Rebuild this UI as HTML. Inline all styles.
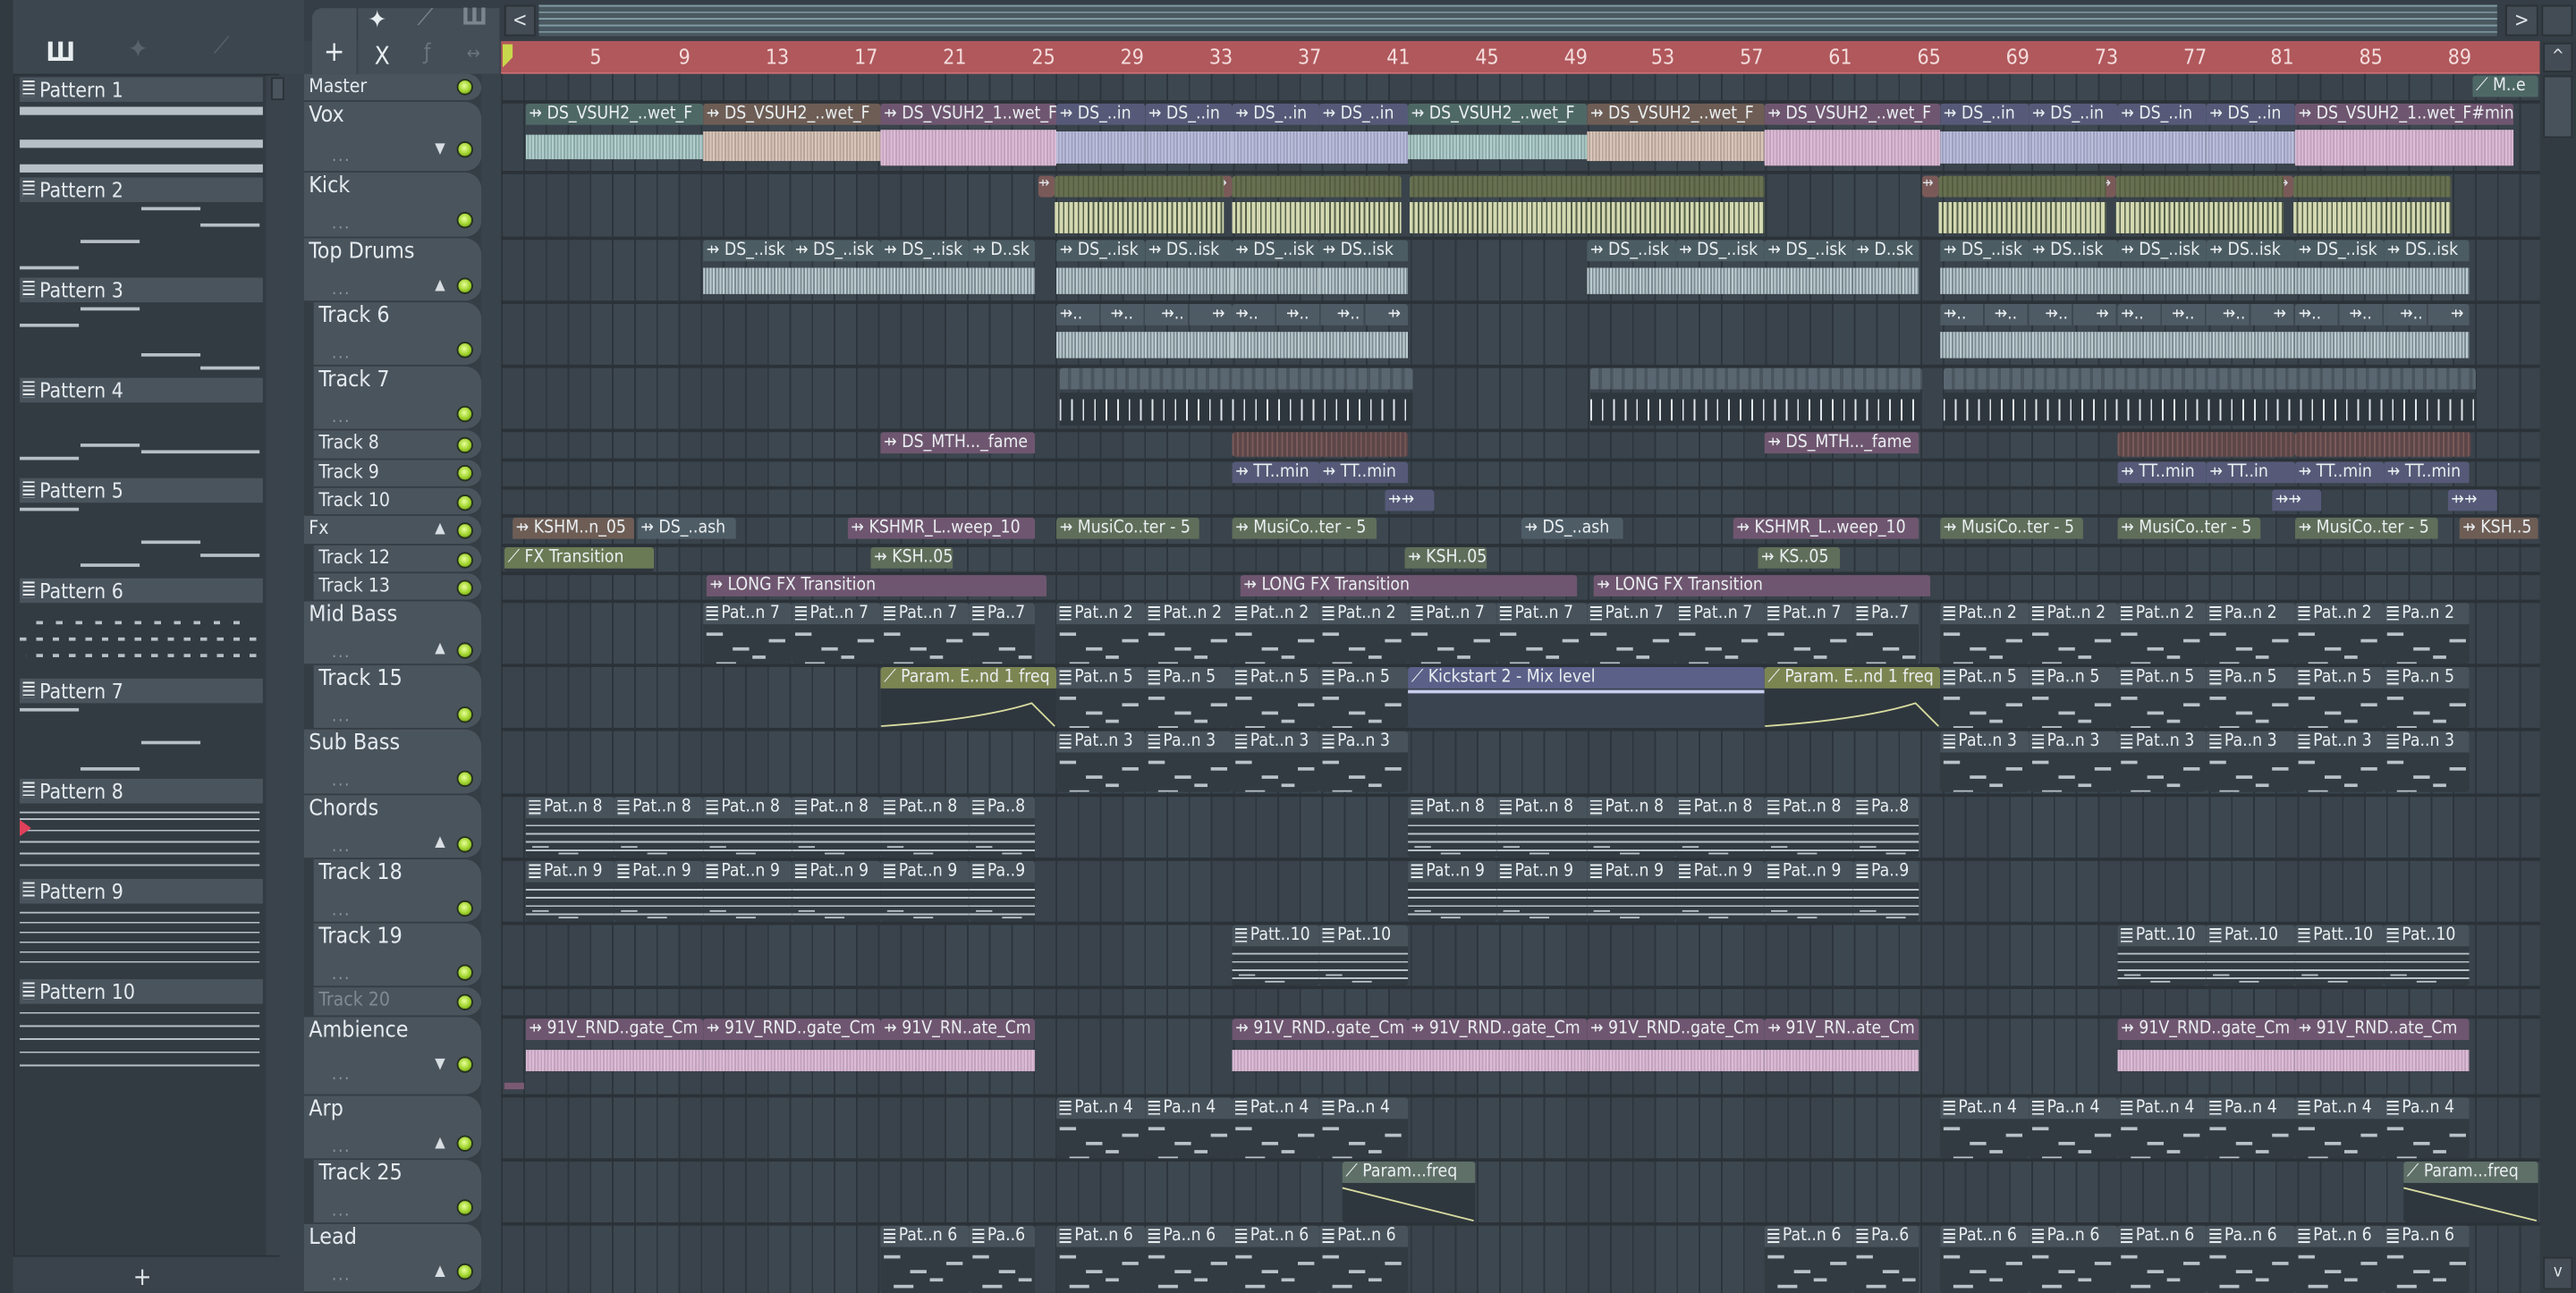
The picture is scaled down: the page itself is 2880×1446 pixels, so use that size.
<!DOCTYPE html>
<html><head><meta charset="utf-8"><style>
*{margin:0;padding:0;box-sizing:border-box}
html,body{width:2880px;height:1446px;overflow:hidden;background:#2c343b}
#s{position:absolute;left:0;top:0;width:1568px;height:787px;transform:scale(1.83673,1.83736);transform-origin:0 0;background:#39434b;font-family:"DejaVu Sans Condensed","DejaVu Sans","Liberation Sans",sans-serif;font-stretch:condensed;color:#dfe6ea}
.a{position:absolute}
.grid{position:absolute;left:305px;top:45px;width:1241px;height:742px;background-color:#3d4750;background-image:repeating-linear-gradient(90deg,#2d353c 0 1px,transparent 1px 13.5px),repeating-linear-gradient(90deg,rgba(0,0,0,.06) 0 54px,transparent 54px 108px)}
.rs{position:absolute;left:305px;width:1241px;height:2px;background:#2b3238}
.c{position:absolute;overflow:hidden;border-radius:2px}
.h{height:13px;font-size:10.5px;line-height:13px;white-space:nowrap;padding-left:2px;color:#e9eef0;overflow:hidden}
.w{position:absolute;left:0;right:0;top:15px;bottom:1px}
.a1 .h{background:#4e6866}.a1 .w{background:repeating-linear-gradient(90deg,#b3cfcd 0 1px,#8aa8a6 1px 2px) center/100% 65% no-repeat}
.a2 .h{background:#6d5d55}.a2 .w{background:repeating-linear-gradient(90deg,#dac6ba 0 1px,#b8a599 1px 2px) center/100% 80% no-repeat}
.a3 .h{background:#6f5670}.a3 .w{background:repeating-linear-gradient(90deg,#dcbcd6 0 1px,#c3a2bd 1px 2px) center/100% 95% no-repeat}
.a4 .h{background:#565a78}.a4 .w{background:repeating-linear-gradient(90deg,#bcbedb 0 1px,#9ea1c0 1px 2px) center/100% 85% no-repeat}
.dr .h{background:#4c5c63}.dr .w{background:repeating-linear-gradient(90deg,#bccbd0 0 1px,#7d8d93 1px 2px) center/100% 80% no-repeat}
.kk .h{background:repeating-linear-gradient(90deg,#667050 0 2px,#555d40 2px 3px)}.kk .w{background:repeating-linear-gradient(90deg,#d3d8b0 0 2px,#56604a 2px 3px) center/100% 95% no-repeat}
.t7 .h{background:repeating-linear-gradient(90deg,#5a6670 0 5px,#4a555e 5px 7px)}.t7 .w{background:repeating-linear-gradient(90deg,#dfe6ea 0 1px,#2f373e 1px 7px) center/100% 65% no-repeat,#2f373e}
.pk .h{background:#6f5670}
.rd{background:repeating-linear-gradient(90deg,#7a5a5a 0 1px,#5c4648 1px 3px)}
.ol .h{background:#7b8552}.ol{background:#2f373e}
.bl .h{background:#5a6088}.bl{background:#3a4450}
.gt .h{background:#5f6e5a}
.sl .h{background:#4e5c66}
.pt .h{background:#47525b}.pt{background:#323b42}
.pt .h:before{content:"";display:inline-block;width:7px;height:9px;margin:2px 2px 0 0;vertical-align:top;background:repeating-linear-gradient(#e8eef0 0 1px,#47525b 1px 2.5px),#e8eef0}
.pn{position:absolute;left:0;right:0;top:14px;bottom:0;background:linear-gradient(#b9c2c8,#b9c2c8) 2px 4px/10px 2px no-repeat,linear-gradient(#b9c2c8,#b9c2c8) 18px 13px/10px 2px no-repeat,linear-gradient(#b9c2c8,#b9c2c8) 30px 18px/8px 2px no-repeat,linear-gradient(#b9c2c8,#b9c2c8) 8px 22px/12px 2px no-repeat,linear-gradient(#b9c2c8,#b9c2c8) 40px 8px/10px 2px no-repeat}
.pc{position:absolute;left:0;right:0;top:14px;bottom:0;background:repeating-linear-gradient(#b9c2c8 0 1px,transparent 1px 5px) 0 3px/100% 20px no-repeat,linear-gradient(#b9c2c8,#b9c2c8) 4px 16px/10px 1px no-repeat,linear-gradient(#b9c2c8,#b9c2c8) 20px 20px/12px 1px no-repeat}
.th{position:absolute;left:185px;width:108px;background:#4a545d;border-radius:0 10px 10px 0;border-bottom:1px solid #353d44}
.sub{border-left:6px solid #353d44}
.tn{position:absolute;left:3px;top:0;font-size:13.5px;color:#e4eaee;white-space:nowrap}
.sm .tn{font-size:11.5px}
.led{position:absolute;right:5px;width:10px;height:10px;border-radius:50%;background:radial-gradient(circle at 45% 40%,#e8ff9a 0,#9ed22a 55%,#4f7a10 100%);border:1px solid #26301f}
.dt{position:absolute;left:17px;font-size:10px;color:#8d989f;letter-spacing:1px}
.tri{position:absolute;right:22px;font-size:9px;color:#d8dee2}
.pat{position:absolute;left:12px;width:148px;height:61px}
.pat .ph{height:15px;background:#4a545d;font-size:12.5px;line-height:15px;padding-left:2px;color:#e4eaee}
.pat .ph:before{content:"";display:inline-block;width:7px;height:10px;margin:2px 3px 0 0;vertical-align:top;background:repeating-linear-gradient(#e8eef0 0 1px,#4a545d 1px 2.5px),#e8eef0}
.nb{position:absolute;height:3px;background:#b7c0c6}
.rn{position:absolute;top:27px;font-size:12.5px;color:#f4dcdc}
</style></head><body><div id="s">

<div class="a" style="left:0;top:0;width:8px;height:787px;background:#313a41"></div>
<div class="a" style="left:8px;top:0;width:177px;height:45px;background:#3c464e"></div>
<div class="a" style="left:28px;top:22px;font-size:16px;color:#e8eef0;font-weight:bold">Ш</div>
<div class="a" style="left:78px;top:20px;font-size:16px;color:#58636b">✦</div>
<div class="a" style="left:130px;top:20px;font-size:14px;color:#58636b">⟋</div>
<div class="a" style="left:8px;top:45px;width:162px;height:720px;background:#323b42;border:1px solid #2a3137"></div>
<div class="a" style="left:162px;top:46px;width:14px;height:718px;background:#3a434b"></div>
<div class="a" style="left:165px;top:47px;width:8px;height:14px;background:#4a545d;border:1px solid #2a3137"></div>
<div class="a" style="left:8px;top:765px;width:177px;height:22px;background:#3a434b"></div>
<div class="a" style="left:81px;top:768px;font-size:15px;color:#dfe6ea">+</div>

<div class="pat" style="top:47px"><div class="ph">Pattern 1</div><div class="nb" style="left:0;top:18px;width:148px;height:5px"></div><div class="nb" style="left:0;top:38px;width:148px;height:5px"></div><div class="nb" style="left:0;top:53px;width:148px;height:5px"></div></div>
<div class="pat" style="top:108px"><div class="ph">Pattern 2</div><div class="nb" style="left:74px;top:18px;width:36px;height:2px"></div><div class="nb" style="left:110px;top:28px;width:36px;height:2px"></div><div class="nb" style="left:37px;top:38px;width:36px;height:2px"></div><div class="nb" style="left:0;top:54px;width:36px;height:2px"></div></div>
<div class="pat" style="top:169px"><div class="ph">Pattern 3</div><div class="nb" style="left:37px;top:18px;width:36px;height:2px"></div><div class="nb" style="left:0;top:28px;width:36px;height:2px"></div><div class="nb" style="left:74px;top:46px;width:36px;height:2px"></div><div class="nb" style="left:110px;top:54px;width:36px;height:2px"></div></div>
<div class="pat" style="top:230px"><div class="ph">Pattern 4</div><div class="nb" style="left:0;top:48px;width:36px;height:2px"></div><div class="nb" style="left:37px;top:40px;width:36px;height:2px"></div><div class="nb" style="left:74px;top:44px;width:72px;height:2px"></div></div>
<div class="pat" style="top:291px"><div class="ph">Pattern 5</div><div class="nb" style="left:0;top:18px;width:36px;height:2px"></div><div class="nb" style="left:74px;top:38px;width:36px;height:2px"></div><div class="nb" style="left:110px;top:46px;width:36px;height:2px"></div><div class="nb" style="left:37px;top:52px;width:36px;height:2px"></div></div>
<div class="pat" style="top:352px"><div class="ph">Pattern 6</div><div class="nb" style="left:10px;top:26px;width:130px;height:2px;background:repeating-linear-gradient(90deg,#b7c0c6 0 4px,transparent 4px 12px)"></div><div class="nb" style="left:0;top:36px;width:146px;height:2px;background:repeating-linear-gradient(90deg,#b7c0c6 0 4px,transparent 4px 10px)"></div><div class="nb" style="left:4px;top:46px;width:140px;height:2px;background:repeating-linear-gradient(90deg,transparent 0 6px,#b7c0c6 6px 10px)"></div></div>
<div class="pat" style="top:413px"><div class="ph">Pattern 7</div><div class="nb" style="left:0;top:18px;width:36px;height:2px"></div><div class="nb" style="left:74px;top:38px;width:36px;height:2px"></div><div class="nb" style="left:37px;top:54px;width:36px;height:2px"></div></div>
<div class="pat" style="top:474px"><div class="ph">Pattern 8</div><div class="nb" style="left:0;top:20px;width:146px;height:2px;background:repeating-linear-gradient(#b7c0c6 0 1px,transparent 1px 6px)"></div><div class="nb" style="left:0;top:24px;width:146px;height:30px;background:repeating-linear-gradient(#b7c0c6 0 1px,transparent 1px 7px)"></div></div>
<div class="a" style="left:12px;top:499px;width:0;height:0;border-left:7px solid #e0405a;border-top:5px solid transparent;border-bottom:5px solid transparent"></div>
<div class="pat" style="top:535px"><div class="ph">Pattern 9</div><div class="nb" style="left:0;top:20px;width:146px;height:36px;background:repeating-linear-gradient(#b7c0c6 0 1px,transparent 1px 6px)"></div></div>
<div class="pat" style="top:596px"><div class="ph">Pattern 10</div><div class="nb" style="left:0;top:20px;width:146px;height:36px;background:repeating-linear-gradient(#b7c0c6 0 1px,transparent 1px 8px)"></div></div>

<div class="a" style="left:185px;top:0;width:1383px;height:25px;background:#353e46"></div>
<div class="a" style="left:190px;top:5px;width:27px;height:40px;background:#48525b;border-radius:6px 0 0 0"></div>
<div class="a" style="left:197px;top:22px;font-size:17px;color:#e8eef0">+</div>
<div class="a" style="left:218px;top:5px;width:86px;height:40px;background:#444e57"></div>
<div class="a" style="left:224px;top:3px;font-size:15px;color:#e8eef0">✦</div>
<div class="a" style="left:254px;top:3px;font-size:14px;color:#7a858d">⟋</div>
<div class="a" style="left:281px;top:3px;font-size:14px;color:#7a858d;font-weight:bold">Ш</div>
<div class="a" style="left:228px;top:25px;font-size:15px;color:#e8eef0">X</div>
<div class="a" style="left:258px;top:25px;font-size:13px;color:#6a757d">ƒ</div>
<div class="a" style="left:284px;top:26px;font-size:11px;color:#6a757d">↔</div>
<div class="a" style="left:307px;top:3px;width:19px;height:19px;background:#434c54;border:1px solid #2a3137;font-size:12px;text-align:center;line-height:17px">&lt;</div>
<div class="a" style="left:328px;top:3px;width:1192px;height:19px;background:#4a5860;background-image:repeating-linear-gradient(#7f9aa2 0 1px,transparent 1px 4px)"></div>
<div class="a" style="left:1525px;top:3px;width:20px;height:19px;background:#434c54;border:1px solid #2a3137;font-size:12px;text-align:center;line-height:17px">&gt;</div>
<div class="a" style="left:1547px;top:3px;width:19px;height:19px;background:#434c54;border:1px solid #2a3137"></div>
<div class="a" style="left:305px;top:25px;width:1241px;height:20px;background:#b0585c;border-bottom:1px solid #d07074"></div>
<div class="a" style="left:306px;top:27px;width:0;height:0;border-left:6px solid #c8d84c;border-top:8px solid #c8d84c;border-bottom:6px solid transparent"></div>
<div class="rn" style="left:359px">5</div><div class="rn" style="left:413px">9</div><div class="rn" style="left:466px">13</div><div class="rn" style="left:520px">17</div><div class="rn" style="left:574px">21</div><div class="rn" style="left:628px">25</div><div class="rn" style="left:682px">29</div><div class="rn" style="left:736px">33</div><div class="rn" style="left:790px">37</div><div class="rn" style="left:844px">41</div><div class="rn" style="left:898px">45</div><div class="rn" style="left:952px">49</div><div class="rn" style="left:1005px">53</div><div class="rn" style="left:1059px">57</div><div class="rn" style="left:1113px">61</div><div class="rn" style="left:1167px">65</div><div class="rn" style="left:1221px">69</div><div class="rn" style="left:1275px">73</div><div class="rn" style="left:1329px">77</div><div class="rn" style="left:1382px">81</div><div class="rn" style="left:1436px">85</div><div class="rn" style="left:1490px">89</div>
<div class="a" style="left:1546px;top:25px;width:22px;height:762px;background:#333b42"></div>
<div class="a" style="left:1548px;top:26px;width:18px;height:18px;background:#434c54;border:1px solid #2a3137;font-size:10px;text-align:center;line-height:16px">^</div>
<div class="a" style="left:1548px;top:46px;width:18px;height:38px;background:#48525a;border:1px solid #2a3137"></div>
<div class="a" style="left:1548px;top:765px;width:18px;height:20px;background:#434c54;border:1px solid #2a3137;font-size:10px;text-align:center;line-height:18px">v</div>

<div class="a" style="left:185px;top:45px;width:120px;height:742px;background:#353e45"></div>
<div class="a" style="left:293px;top:45px;width:12px;height:742px;background:#39434b"></div>

<div class="th sm" style="top:45px;height:17px"><div class="tn">Master</div><div class="led" style="top:3px"></div></div>
<div class="th" style="top:62px;height:43px"><div class="tn">Vox</div><div class="tri" style="top:24px">▼</div><div class="dt" style="top:28px">...</div><div class="led" style="top:24px"></div></div>
<div class="th" style="top:105px;height:40px"><div class="tn">Kick</div><div class="dt" style="top:26px">...</div><div class="led" style="top:24px"></div></div>
<div class="th" style="top:145px;height:39px"><div class="tn">Top Drums</div><div class="tri" style="top:24px">▲</div><div class="dt" style="top:26px">...</div><div class="led" style="top:24px"></div></div>
<div class="th sub" style="top:184px;height:39px"><div class="tn">Track 6</div><div class="dt" style="top:26px;left:11px">...</div><div class="led" style="top:24px"></div></div>
<div class="th sub" style="top:223px;height:39px"><div class="tn">Track 7</div><div class="dt" style="top:26px;left:11px">...</div><div class="led" style="top:24px"></div></div>
<div class="th sub sm" style="top:262px;height:18px"><div class="tn">Track 8</div><div class="led" style="top:4px"></div></div>
<div class="th sub sm" style="top:280px;height:17px"><div class="tn">Track 9</div><div class="led" style="top:3px"></div></div>
<div class="th sub sm" style="top:297px;height:17px"><div class="tn">Track 10</div><div class="led" style="top:4px"></div></div>
<div class="th sm" style="top:314px;height:18px"><div class="tn">Fx</div><div class="tri" style="top:3px">▲</div><div class="led" style="top:4px"></div></div>
<div class="th sub sm" style="top:332px;height:17px"><div class="tn">Track 12</div><div class="led" style="top:4px"></div></div>
<div class="th sub sm" style="top:349px;height:17px"><div class="tn">Track 13</div><div class="led" style="top:4px"></div></div>
<div class="th" style="top:366px;height:39px"><div class="tn">Mid Bass</div><div class="tri" style="top:24px">▲</div><div class="dt" style="top:26px">...</div><div class="led" style="top:25px"></div></div>
<div class="th sub" style="top:405px;height:39px"><div class="tn">Track 15</div><div class="dt" style="top:26px;left:11px">...</div><div class="led" style="top:25px"></div></div>
<div class="th" style="top:444px;height:40px"><div class="tn">Sub Bass</div><div class="dt" style="top:26px">...</div><div class="led" style="top:25px"></div></div>
<div class="th" style="top:484px;height:39px"><div class="tn">Chords</div><div class="tri" style="top:24px">▲</div><div class="dt" style="top:26px">...</div><div class="led" style="top:25px"></div></div>
<div class="th sub" style="top:523px;height:39px"><div class="tn">Track 18</div><div class="dt" style="top:26px;left:11px">...</div><div class="led" style="top:25px"></div></div>
<div class="th sub" style="top:562px;height:39px"><div class="tn">Track 19</div><div class="dt" style="top:26px;left:11px">...</div><div class="led" style="top:25px"></div></div>
<div class="th sub sm" style="top:601px;height:18px"><div class="tn" style="color:#7f8a92">Track 20</div><div class="led" style="top:4px"></div></div>
<div class="th" style="top:619px;height:48px"><div class="tn">Ambience</div><div class="tri" style="top:24px">▼</div><div class="dt" style="top:30px">...</div><div class="led" style="top:24px"></div></div>
<div class="th" style="top:667px;height:39px"><div class="tn">Arp</div><div class="tri" style="top:24px">▲</div><div class="dt" style="top:26px">...</div><div class="led" style="top:24px"></div></div>
<div class="th sub" style="top:706px;height:39px"><div class="tn">Track 25</div><div class="dt" style="top:26px;left:11px">...</div><div class="led" style="top:24px"></div></div>
<div class="th" style="top:745px;height:42px"><div class="tn">Lead</div><div class="tri" style="top:24px">▲</div><div class="dt" style="top:26px">...</div><div class="led" style="top:24px"></div></div>

<div class="grid"></div>
<div class="rs" style="top:61px"></div><div class="rs" style="top:104px"></div><div class="rs" style="top:144px"></div><div class="rs" style="top:183px"></div><div class="rs" style="top:222px"></div><div class="rs" style="top:261px"></div><div class="rs" style="top:279px"></div><div class="rs" style="top:296px"></div><div class="rs" style="top:313px"></div><div class="rs" style="top:331px"></div><div class="rs" style="top:348px"></div><div class="rs" style="top:365px"></div><div class="rs" style="top:404px"></div><div class="rs" style="top:443px"></div><div class="rs" style="top:483px"></div><div class="rs" style="top:522px"></div><div class="rs" style="top:561px"></div><div class="rs" style="top:600px"></div><div class="rs" style="top:618px"></div><div class="rs" style="top:666px"></div><div class="rs" style="top:705px"></div><div class="rs" style="top:744px"></div>

<div class="c a1" style="left:1505px;top:46px;width:40px;height:14px"><div class="h">⟋ M..e</div></div>
<div class="c a1" style="left:320px;top:63px;width:108px;height:39px"><div class="h">⇸ DS_VSUH2_..wet_F</div><div class="w"></div></div>
<div class="c a2" style="left:428px;top:63px;width:108px;height:39px"><div class="h">⇸ DS_VSUH2_..wet_F</div><div class="w"></div></div>
<div class="c a3" style="left:536px;top:63px;width:107px;height:39px"><div class="h">⇸ DS_VSUH2_1..wet_F</div><div class="w"></div></div>
<div class="c a4" style="left:643px;top:63px;width:54px;height:39px"><div class="h">⇸ DS_..in</div><div class="w"></div></div>
<div class="c a4" style="left:697px;top:63px;width:53px;height:39px"><div class="h">⇸ DS_..in</div><div class="w"></div></div>
<div class="c a4" style="left:750px;top:63px;width:53px;height:39px"><div class="h">⇸ DS_..in</div><div class="w"></div></div>
<div class="c a4" style="left:803px;top:63px;width:54px;height:39px"><div class="h">⇸ DS_..in</div><div class="w"></div></div>
<div class="c a1" style="left:857px;top:63px;width:109px;height:39px"><div class="h">⇸ DS_VSUH2_..wet_F</div><div class="w"></div></div>
<div class="c a2" style="left:966px;top:63px;width:108px;height:39px"><div class="h">⇸ DS_VSUH2_..wet_F</div><div class="w"></div></div>
<div class="c a3" style="left:1074px;top:63px;width:107px;height:39px"><div class="h">⇸ DS_VSUH2_..wet_F</div><div class="w"></div></div>
<div class="c a4" style="left:1181px;top:63px;width:54px;height:39px"><div class="h">⇸ DS_..in</div><div class="w"></div></div>
<div class="c a4" style="left:1235px;top:63px;width:54px;height:39px"><div class="h">⇸ DS_..in</div><div class="w"></div></div>
<div class="c a4" style="left:1289px;top:63px;width:54px;height:39px"><div class="h">⇸ DS_..in</div><div class="w"></div></div>
<div class="c a4" style="left:1343px;top:63px;width:54px;height:39px"><div class="h">⇸ DS_..in</div><div class="w"></div></div>
<div class="c a3" style="left:1397px;top:63px;width:133px;height:39px"><div class="h">⇸ DS_VSUH2_1..wet_F#min</div><div class="w"></div></div>
<div class="c" style="left:632px;top:107px;width:10px;height:13px;background:#7a5a58;font-size:9px">⇸</div>
<div class="c" style="left:740px;top:107px;width:10px;height:13px;background:#7a5a58;font-size:9px">⇸</div>
<div class="c" style="left:1170px;top:107px;width:10px;height:13px;background:#7a5a58;font-size:9px">⇸</div>
<div class="c" style="left:1278px;top:107px;width:10px;height:13px;background:#7a5a58;font-size:9px">⇸</div>
<div class="c" style="left:1386px;top:107px;width:10px;height:13px;background:#7a5a58;font-size:9px">⇸</div>
<div class="c kk" style="left:642px;top:107px;width:103px;height:36px"><div class="h"></div><div class="w"></div></div>
<div class="c kk" style="left:750px;top:107px;width:103px;height:36px"><div class="h"></div><div class="w"></div></div>
<div class="c kk" style="left:858px;top:107px;width:216px;height:36px"><div class="h"></div><div class="w"></div></div>
<div class="c kk" style="left:1180px;top:107px;width:102px;height:36px"><div class="h"></div><div class="w"></div></div>
<div class="c kk" style="left:1288px;top:107px;width:102px;height:36px"><div class="h"></div><div class="w"></div></div>
<div class="c kk" style="left:1396px;top:107px;width:96px;height:36px"><div class="h"></div><div class="w"></div></div>
<div class="c dr" style="left:428px;top:146px;width:54px;height:36px"><div class="h">⇸ DS_..isk</div><div class="w"></div></div>
<div class="c dr" style="left:482px;top:146px;width:54px;height:36px"><div class="h">⇸ DS_..isk</div><div class="w"></div></div>
<div class="c dr" style="left:536px;top:146px;width:54px;height:36px"><div class="h">⇸ DS_..isk</div><div class="w"></div></div>
<div class="c dr" style="left:590px;top:146px;width:40px;height:36px"><div class="h">⇸ D..sk</div><div class="w"></div></div>
<div class="c dr" style="left:643px;top:146px;width:54px;height:36px"><div class="h">⇸ DS_..isk</div><div class="w"></div></div>
<div class="c dr" style="left:697px;top:146px;width:53px;height:36px"><div class="h">⇸ DS..isk</div><div class="w"></div></div>
<div class="c dr" style="left:750px;top:146px;width:53px;height:36px"><div class="h">⇸ DS_..isk</div><div class="w"></div></div>
<div class="c dr" style="left:803px;top:146px;width:54px;height:36px"><div class="h">⇸ DS..isk</div><div class="w"></div></div>
<div class="c dr" style="left:966px;top:146px;width:54px;height:36px"><div class="h">⇸ DS_..isk</div><div class="w"></div></div>
<div class="c dr" style="left:1020px;top:146px;width:54px;height:36px"><div class="h">⇸ DS_..isk</div><div class="w"></div></div>
<div class="c dr" style="left:1074px;top:146px;width:54px;height:36px"><div class="h">⇸ DS_..isk</div><div class="w"></div></div>
<div class="c dr" style="left:1128px;top:146px;width:40px;height:36px"><div class="h">⇸ D..sk</div><div class="w"></div></div>
<div class="c dr" style="left:1181px;top:146px;width:54px;height:36px"><div class="h">⇸ DS_..isk</div><div class="w"></div></div>
<div class="c dr" style="left:1235px;top:146px;width:54px;height:36px"><div class="h">⇸ DS..isk</div><div class="w"></div></div>
<div class="c dr" style="left:1289px;top:146px;width:54px;height:36px"><div class="h">⇸ DS_..isk</div><div class="w"></div></div>
<div class="c dr" style="left:1343px;top:146px;width:54px;height:36px"><div class="h">⇸ DS..isk</div><div class="w"></div></div>
<div class="c dr" style="left:1397px;top:146px;width:54px;height:36px"><div class="h">⇸ DS_..isk</div><div class="w"></div></div>
<div class="c dr" style="left:1451px;top:146px;width:52px;height:36px"><div class="h">⇸ DS..isk</div><div class="w"></div></div>
<div class="c dr" style="left:643px;top:185px;width:107px;height:36px"><div class="h" style="background:repeating-linear-gradient(90deg,#4e5a64 0 26px,#3d4750 26px 27px);word-spacing:14px">⇸.. ⇸.. ⇸.. ⇸</div><div class="w"></div></div>
<div class="c dr" style="left:750px;top:185px;width:107px;height:36px"><div class="h" style="background:repeating-linear-gradient(90deg,#4e5a64 0 26px,#3d4750 26px 27px);word-spacing:14px">⇸.. ⇸.. ⇸.. ⇸</div><div class="w"></div></div>
<div class="c dr" style="left:1181px;top:185px;width:108px;height:36px"><div class="h" style="background:repeating-linear-gradient(90deg,#4e5a64 0 26px,#3d4750 26px 27px);word-spacing:14px">⇸.. ⇸.. ⇸.. ⇸</div><div class="w"></div></div>
<div class="c dr" style="left:1289px;top:185px;width:108px;height:36px"><div class="h" style="background:repeating-linear-gradient(90deg,#4e5a64 0 26px,#3d4750 26px 27px);word-spacing:14px">⇸.. ⇸.. ⇸.. ⇸</div><div class="w"></div></div>
<div class="c dr" style="left:1397px;top:185px;width:106px;height:36px"><div class="h" style="background:repeating-linear-gradient(90deg,#4e5a64 0 26px,#3d4750 26px 27px);word-spacing:14px">⇸.. ⇸.. ⇸.. ⇸</div><div class="w"></div></div>
<div class="c t7" style="left:645px;top:224px;width:215px;height:36px"><div class="h"></div><div class="w"></div></div>
<div class="c t7" style="left:968px;top:224px;width:202px;height:36px"><div class="h"></div><div class="w"></div></div>
<div class="c t7" style="left:1183px;top:224px;width:324px;height:36px"><div class="h"></div><div class="w"></div></div>
<div class="c pk" style="left:536px;top:263px;width:94px;height:15px"><div class="h">⇸ DS_MTH..._fame</div></div>
<div class="c pk" style="left:1074px;top:263px;width:94px;height:15px"><div class="h">⇸ DS_MTH..._fame</div></div>
<div class="c rd" style="left:750px;top:263px;width:107px;height:15px"></div>
<div class="c rd" style="left:1289px;top:263px;width:108px;height:15px"></div>
<div class="c rd" style="left:1397px;top:263px;width:107px;height:15px"></div>
<div class="c a4" style="left:750px;top:281px;width:53px;height:14px"><div class="h">⇸ TT..min</div></div>
<div class="c a4" style="left:803px;top:281px;width:54px;height:14px"><div class="h">⇸ TT..min</div></div>
<div class="c a4" style="left:1289px;top:281px;width:54px;height:14px"><div class="h">⇸ TT..min</div></div>
<div class="c a4" style="left:1343px;top:281px;width:54px;height:14px"><div class="h">⇸ TT..in</div></div>
<div class="c a4" style="left:1397px;top:281px;width:54px;height:14px"><div class="h">⇸ TT..min</div></div>
<div class="c a4" style="left:1451px;top:281px;width:52px;height:14px"><div class="h">⇸ TT..min</div></div>
<div class="c a4" style="left:843px;top:298px;width:30px;height:14px"><div class="h">⇸⇸</div></div>
<div class="c a4" style="left:1383px;top:298px;width:30px;height:14px"><div class="h">⇸⇸</div></div>
<div class="c a4" style="left:1490px;top:298px;width:30px;height:14px"><div class="h">⇸⇸</div></div>
<div class="c a2" style="left:312px;top:315px;width:74px;height:15px"><div class="h">⇸ KSHM..n_05</div></div>
<div class="c sl" style="left:388px;top:315px;width:60px;height:15px"><div class="h">⇸ DS_..ash</div></div>
<div class="c pk" style="left:516px;top:315px;width:114px;height:15px"><div class="h">⇸ KSHMR_L..weep_10</div></div>
<div class="c gt" style="left:643px;top:315px;width:87px;height:15px"><div class="h">⇸ MusiCo..ter - 5</div></div>
<div class="c gt" style="left:750px;top:315px;width:88px;height:15px"><div class="h">⇸ MusiCo..ter - 5</div></div>
<div class="c sl" style="left:926px;top:315px;width:62px;height:15px"><div class="h">⇸ DS_..ash</div></div>
<div class="c pk" style="left:1055px;top:315px;width:113px;height:15px"><div class="h">⇸ KSHMR_L..weep_10</div></div>
<div class="c gt" style="left:1181px;top:315px;width:87px;height:15px"><div class="h">⇸ MusiCo..ter - 5</div></div>
<div class="c gt" style="left:1289px;top:315px;width:87px;height:15px"><div class="h">⇸ MusiCo..ter - 5</div></div>
<div class="c gt" style="left:1397px;top:315px;width:87px;height:15px"><div class="h">⇸ MusiCo..ter - 5</div></div>
<div class="c a2" style="left:1497px;top:315px;width:48px;height:15px"><div class="h">⇸ KSH..5</div></div>
<div class="c ol" style="left:307px;top:333px;width:91px;height:15px"><div class="h" style="background:#6a7a55">⟋ FX Transition</div></div>
<div class="c gt" style="left:530px;top:333px;width:50px;height:15px"><div class="h">⇸ KSH..05</div></div>
<div class="c gt" style="left:855px;top:333px;width:50px;height:15px"><div class="h">⇸ KSH..05</div></div>
<div class="c gt" style="left:1070px;top:333px;width:50px;height:15px"><div class="h">⇸ KS..05</div></div>
<div class="c pk" style="left:430px;top:350px;width:207px;height:15px"><div class="h">⇸ LONG FX Transition</div></div>
<div class="c pk" style="left:755px;top:350px;width:205px;height:15px"><div class="h">⇸ LONG FX Transition</div></div>
<div class="c pk" style="left:970px;top:350px;width:205px;height:15px"><div class="h">⇸ LONG FX Transition</div></div>
<div class="c pt" style="left:428px;top:367px;width:54px;height:37px"><div class="h">Pat..n 7</div><div class="pn"></div></div>
<div class="c pt" style="left:482px;top:367px;width:54px;height:37px"><div class="h">Pat..n 7</div><div class="pn"></div></div>
<div class="c pt" style="left:536px;top:367px;width:54px;height:37px"><div class="h">Pat..n 7</div><div class="pn"></div></div>
<div class="c pt" style="left:590px;top:367px;width:40px;height:37px"><div class="h">Pa..7</div><div class="pn"></div></div>
<div class="c pt" style="left:643px;top:367px;width:54px;height:37px"><div class="h">Pat..n 2</div><div class="pn"></div></div>
<div class="c pt" style="left:697px;top:367px;width:53px;height:37px"><div class="h">Pat..n 2</div><div class="pn"></div></div>
<div class="c pt" style="left:750px;top:367px;width:53px;height:37px"><div class="h">Pat..n 2</div><div class="pn"></div></div>
<div class="c pt" style="left:803px;top:367px;width:54px;height:37px"><div class="h">Pat..n 2</div><div class="pn"></div></div>
<div class="c pt" style="left:857px;top:367px;width:54px;height:37px"><div class="h">Pat..n 7</div><div class="pn"></div></div>
<div class="c pt" style="left:911px;top:367px;width:55px;height:37px"><div class="h">Pat..n 7</div><div class="pn"></div></div>
<div class="c pt" style="left:966px;top:367px;width:54px;height:37px"><div class="h">Pat..n 7</div><div class="pn"></div></div>
<div class="c pt" style="left:1020px;top:367px;width:54px;height:37px"><div class="h">Pat..n 7</div><div class="pn"></div></div>
<div class="c pt" style="left:1074px;top:367px;width:54px;height:37px"><div class="h">Pat..n 7</div><div class="pn"></div></div>
<div class="c pt" style="left:1128px;top:367px;width:40px;height:37px"><div class="h">Pa..7</div><div class="pn"></div></div>
<div class="c pt" style="left:1181px;top:367px;width:54px;height:37px"><div class="h">Pat..n 2</div><div class="pn"></div></div>
<div class="c pt" style="left:1235px;top:367px;width:54px;height:37px"><div class="h">Pat..n 2</div><div class="pn"></div></div>
<div class="c pt" style="left:1289px;top:367px;width:54px;height:37px"><div class="h">Pat..n 2</div><div class="pn"></div></div>
<div class="c pt" style="left:1343px;top:367px;width:54px;height:37px"><div class="h">Pa..n 2</div><div class="pn"></div></div>
<div class="c pt" style="left:1397px;top:367px;width:54px;height:37px"><div class="h">Pat..n 2</div><div class="pn"></div></div>
<div class="c pt" style="left:1451px;top:367px;width:52px;height:37px"><div class="h">Pa..n 2</div><div class="pn"></div></div>
<div class="c ol" style="left:536px;top:406px;width:107px;height:37px"><div class="h">⟋ Param. E..nd 1 freq</div><svg class="a" style="left:0;top:14px" width="107" height="23"><path d="M0 22 Q60 18 92 8 L106 22" stroke="#d8dca0" fill="none"/></svg></div>
<div class="c pt" style="left:643px;top:406px;width:54px;height:37px"><div class="h">Pat..n 5</div><div class="pn"></div></div>
<div class="c pt" style="left:697px;top:406px;width:53px;height:37px"><div class="h">Pa..n 5</div><div class="pn"></div></div>
<div class="c pt" style="left:750px;top:406px;width:53px;height:37px"><div class="h">Pat..n 5</div><div class="pn"></div></div>
<div class="c pt" style="left:803px;top:406px;width:54px;height:37px"><div class="h">Pa..n 5</div><div class="pn"></div></div>
<div class="c bl" style="left:857px;top:406px;width:217px;height:37px"><div class="h">⟋ Kickstart 2 - Mix level</div><div class="a" style="left:0;top:14px;width:217px;height:2px;background:#c8ccee"></div></div>
<div class="c ol" style="left:1074px;top:406px;width:107px;height:37px"><div class="h">⟋ Param. E..nd 1 freq</div><svg class="a" style="left:0;top:14px" width="107" height="23"><path d="M0 22 Q60 18 92 8 L106 22" stroke="#d8dca0" fill="none"/></svg></div>
<div class="c pt" style="left:1181px;top:406px;width:54px;height:37px"><div class="h">Pat..n 5</div><div class="pn"></div></div>
<div class="c pt" style="left:1235px;top:406px;width:54px;height:37px"><div class="h">Pa..n 5</div><div class="pn"></div></div>
<div class="c pt" style="left:1289px;top:406px;width:54px;height:37px"><div class="h">Pat..n 5</div><div class="pn"></div></div>
<div class="c pt" style="left:1343px;top:406px;width:54px;height:37px"><div class="h">Pa..n 5</div><div class="pn"></div></div>
<div class="c pt" style="left:1397px;top:406px;width:54px;height:37px"><div class="h">Pat..n 5</div><div class="pn"></div></div>
<div class="c pt" style="left:1451px;top:406px;width:52px;height:37px"><div class="h">Pa..n 5</div><div class="pn"></div></div>
<div class="c pt" style="left:643px;top:445px;width:54px;height:37px"><div class="h">Pat..n 3</div><div class="pn"></div></div>
<div class="c pt" style="left:697px;top:445px;width:53px;height:37px"><div class="h">Pa..n 3</div><div class="pn"></div></div>
<div class="c pt" style="left:750px;top:445px;width:53px;height:37px"><div class="h">Pat..n 3</div><div class="pn"></div></div>
<div class="c pt" style="left:803px;top:445px;width:54px;height:37px"><div class="h">Pa..n 3</div><div class="pn"></div></div>
<div class="c pt" style="left:1181px;top:445px;width:54px;height:37px"><div class="h">Pat..n 3</div><div class="pn"></div></div>
<div class="c pt" style="left:1235px;top:445px;width:54px;height:37px"><div class="h">Pa..n 3</div><div class="pn"></div></div>
<div class="c pt" style="left:1289px;top:445px;width:54px;height:37px"><div class="h">Pat..n 3</div><div class="pn"></div></div>
<div class="c pt" style="left:1343px;top:445px;width:54px;height:37px"><div class="h">Pa..n 3</div><div class="pn"></div></div>
<div class="c pt" style="left:1397px;top:445px;width:54px;height:37px"><div class="h">Pat..n 3</div><div class="pn"></div></div>
<div class="c pt" style="left:1451px;top:445px;width:52px;height:37px"><div class="h">Pa..n 3</div><div class="pn"></div></div>
<div class="c pt" style="left:320px;top:485px;width:54px;height:37px"><div class="h">Pat..n 8</div><div class="pc"></div></div>
<div class="c pt" style="left:374px;top:485px;width:54px;height:37px"><div class="h">Pat..n 8</div><div class="pc"></div></div>
<div class="c pt" style="left:428px;top:485px;width:54px;height:37px"><div class="h">Pat..n 8</div><div class="pc"></div></div>
<div class="c pt" style="left:482px;top:485px;width:54px;height:37px"><div class="h">Pat..n 8</div><div class="pc"></div></div>
<div class="c pt" style="left:536px;top:485px;width:54px;height:37px"><div class="h">Pat..n 8</div><div class="pc"></div></div>
<div class="c pt" style="left:590px;top:485px;width:40px;height:37px"><div class="h">Pa..8</div><div class="pc"></div></div>
<div class="c pt" style="left:857px;top:485px;width:54px;height:37px"><div class="h">Pat..n 8</div><div class="pc"></div></div>
<div class="c pt" style="left:911px;top:485px;width:55px;height:37px"><div class="h">Pat..n 8</div><div class="pc"></div></div>
<div class="c pt" style="left:966px;top:485px;width:54px;height:37px"><div class="h">Pat..n 8</div><div class="pc"></div></div>
<div class="c pt" style="left:1020px;top:485px;width:54px;height:37px"><div class="h">Pat..n 8</div><div class="pc"></div></div>
<div class="c pt" style="left:1074px;top:485px;width:54px;height:37px"><div class="h">Pat..n 8</div><div class="pc"></div></div>
<div class="c pt" style="left:1128px;top:485px;width:40px;height:37px"><div class="h">Pa..8</div><div class="pc"></div></div>
<div class="c pt" style="left:320px;top:524px;width:54px;height:37px"><div class="h">Pat..n 9</div><div class="pc"></div></div>
<div class="c pt" style="left:374px;top:524px;width:54px;height:37px"><div class="h">Pat..n 9</div><div class="pc"></div></div>
<div class="c pt" style="left:428px;top:524px;width:54px;height:37px"><div class="h">Pat..n 9</div><div class="pc"></div></div>
<div class="c pt" style="left:482px;top:524px;width:54px;height:37px"><div class="h">Pat..n 9</div><div class="pc"></div></div>
<div class="c pt" style="left:536px;top:524px;width:54px;height:37px"><div class="h">Pat..n 9</div><div class="pc"></div></div>
<div class="c pt" style="left:590px;top:524px;width:40px;height:37px"><div class="h">Pa..9</div><div class="pc"></div></div>
<div class="c pt" style="left:857px;top:524px;width:54px;height:37px"><div class="h">Pat..n 9</div><div class="pc"></div></div>
<div class="c pt" style="left:911px;top:524px;width:55px;height:37px"><div class="h">Pat..n 9</div><div class="pc"></div></div>
<div class="c pt" style="left:966px;top:524px;width:54px;height:37px"><div class="h">Pat..n 9</div><div class="pc"></div></div>
<div class="c pt" style="left:1020px;top:524px;width:54px;height:37px"><div class="h">Pat..n 9</div><div class="pc"></div></div>
<div class="c pt" style="left:1074px;top:524px;width:54px;height:37px"><div class="h">Pat..n 9</div><div class="pc"></div></div>
<div class="c pt" style="left:1128px;top:524px;width:40px;height:37px"><div class="h">Pa..9</div><div class="pc"></div></div>
<div class="c pt" style="left:750px;top:563px;width:53px;height:37px"><div class="h">Patt..10</div><div class="pc"></div></div>
<div class="c pt" style="left:803px;top:563px;width:54px;height:37px"><div class="h">Pat..10</div><div class="pc"></div></div>
<div class="c pt" style="left:1289px;top:563px;width:54px;height:37px"><div class="h">Patt..10</div><div class="pc"></div></div>
<div class="c pt" style="left:1343px;top:563px;width:54px;height:37px"><div class="h">Pat..10</div><div class="pc"></div></div>
<div class="c pt" style="left:1397px;top:563px;width:54px;height:37px"><div class="h">Patt..10</div><div class="pc"></div></div>
<div class="c pt" style="left:1451px;top:563px;width:52px;height:37px"><div class="h">Pat..10</div><div class="pc"></div></div>
<div class="c a3" style="left:320px;top:620px;width:108px;height:38px"><div class="h">⇸ 91V_RND..gate_Cm</div><div class="w" style="background-size:100% 60%"></div></div>
<div class="c a3" style="left:428px;top:620px;width:108px;height:38px"><div class="h">⇸ 91V_RND..gate_Cm</div><div class="w" style="background-size:100% 60%"></div></div>
<div class="c a3" style="left:536px;top:620px;width:94px;height:38px"><div class="h">⇸ 91V_RN..ate_Cm</div><div class="w" style="background-size:100% 60%"></div></div>
<div class="c a3" style="left:750px;top:620px;width:107px;height:38px"><div class="h">⇸ 91V_RND..gate_Cm</div><div class="w" style="background-size:100% 60%"></div></div>
<div class="c a3" style="left:857px;top:620px;width:109px;height:38px"><div class="h">⇸ 91V_RND..gate_Cm</div><div class="w" style="background-size:100% 60%"></div></div>
<div class="c a3" style="left:966px;top:620px;width:108px;height:38px"><div class="h">⇸ 91V_RND..gate_Cm</div><div class="w" style="background-size:100% 60%"></div></div>
<div class="c a3" style="left:1074px;top:620px;width:94px;height:38px"><div class="h">⇸ 91V_RN..ate_Cm</div><div class="w" style="background-size:100% 60%"></div></div>
<div class="c a3" style="left:1289px;top:620px;width:108px;height:38px"><div class="h">⇸ 91V_RND..gate_Cm</div><div class="w" style="background-size:100% 60%"></div></div>
<div class="c a3" style="left:1397px;top:620px;width:106px;height:38px"><div class="h">⇸ 91V_RND..ate_Cm</div><div class="w" style="background-size:100% 60%"></div></div>
<div class="a" style="left:307px;top:659px;width:12px;height:4px;background:#7a5a72"></div>
<div class="c pt" style="left:643px;top:668px;width:54px;height:37px"><div class="h">Pat..n 4</div><div class="pn"></div></div>
<div class="c pt" style="left:697px;top:668px;width:53px;height:37px"><div class="h">Pa..n 4</div><div class="pn"></div></div>
<div class="c pt" style="left:750px;top:668px;width:53px;height:37px"><div class="h">Pat..n 4</div><div class="pn"></div></div>
<div class="c pt" style="left:803px;top:668px;width:54px;height:37px"><div class="h">Pa..n 4</div><div class="pn"></div></div>
<div class="c pt" style="left:1181px;top:668px;width:54px;height:37px"><div class="h">Pat..n 4</div><div class="pn"></div></div>
<div class="c pt" style="left:1235px;top:668px;width:54px;height:37px"><div class="h">Pa..n 4</div><div class="pn"></div></div>
<div class="c pt" style="left:1289px;top:668px;width:54px;height:37px"><div class="h">Pat..n 4</div><div class="pn"></div></div>
<div class="c pt" style="left:1343px;top:668px;width:54px;height:37px"><div class="h">Pa..n 4</div><div class="pn"></div></div>
<div class="c pt" style="left:1397px;top:668px;width:54px;height:37px"><div class="h">Pat..n 4</div><div class="pn"></div></div>
<div class="c pt" style="left:1451px;top:668px;width:52px;height:37px"><div class="h">Pa..n 4</div><div class="pn"></div></div>
<div class="c ol" style="left:817px;top:707px;width:81px;height:37px"><div class="h" style="background:#5f7068">⟋ Param...freq</div><svg class="a" style="left:0;top:14px" width="81" height="23"><path d="M0 2 L80 22" stroke="#d8dca0" fill="none"/></svg></div>
<div class="c ol" style="left:1463px;top:707px;width:82px;height:37px"><div class="h" style="background:#5f7068">⟋ Param...freq</div><svg class="a" style="left:0;top:14px" width="82" height="23"><path d="M0 2 L81 22" stroke="#d8dca0" fill="none"/></svg></div>
<div class="c pt" style="left:536px;top:746px;width:54px;height:41px"><div class="h">Pat..n 6</div><div class="pn"></div></div>
<div class="c pt" style="left:590px;top:746px;width:40px;height:41px"><div class="h">Pa..6</div><div class="pn"></div></div>
<div class="c pt" style="left:643px;top:746px;width:54px;height:41px"><div class="h">Pat..n 6</div><div class="pn"></div></div>
<div class="c pt" style="left:697px;top:746px;width:53px;height:41px"><div class="h">Pa..n 6</div><div class="pn"></div></div>
<div class="c pt" style="left:750px;top:746px;width:53px;height:41px"><div class="h">Pat..n 6</div><div class="pn"></div></div>
<div class="c pt" style="left:803px;top:746px;width:54px;height:41px"><div class="h">Pat..n 6</div><div class="pn"></div></div>
<div class="c pt" style="left:1074px;top:746px;width:54px;height:41px"><div class="h">Pat..n 6</div><div class="pn"></div></div>
<div class="c pt" style="left:1128px;top:746px;width:40px;height:41px"><div class="h">Pa..6</div><div class="pn"></div></div>
<div class="c pt" style="left:1181px;top:746px;width:54px;height:41px"><div class="h">Pat..n 6</div><div class="pn"></div></div>
<div class="c pt" style="left:1235px;top:746px;width:54px;height:41px"><div class="h">Pa..n 6</div><div class="pn"></div></div>
<div class="c pt" style="left:1289px;top:746px;width:54px;height:41px"><div class="h">Pat..n 6</div><div class="pn"></div></div>
<div class="c pt" style="left:1343px;top:746px;width:54px;height:41px"><div class="h">Pa..n 6</div><div class="pn"></div></div>
<div class="c pt" style="left:1397px;top:746px;width:54px;height:41px"><div class="h">Pat..n 6</div><div class="pn"></div></div>
<div class="c pt" style="left:1451px;top:746px;width:52px;height:41px"><div class="h">Pa..n 6</div><div class="pn"></div></div>

</div></body></html>
